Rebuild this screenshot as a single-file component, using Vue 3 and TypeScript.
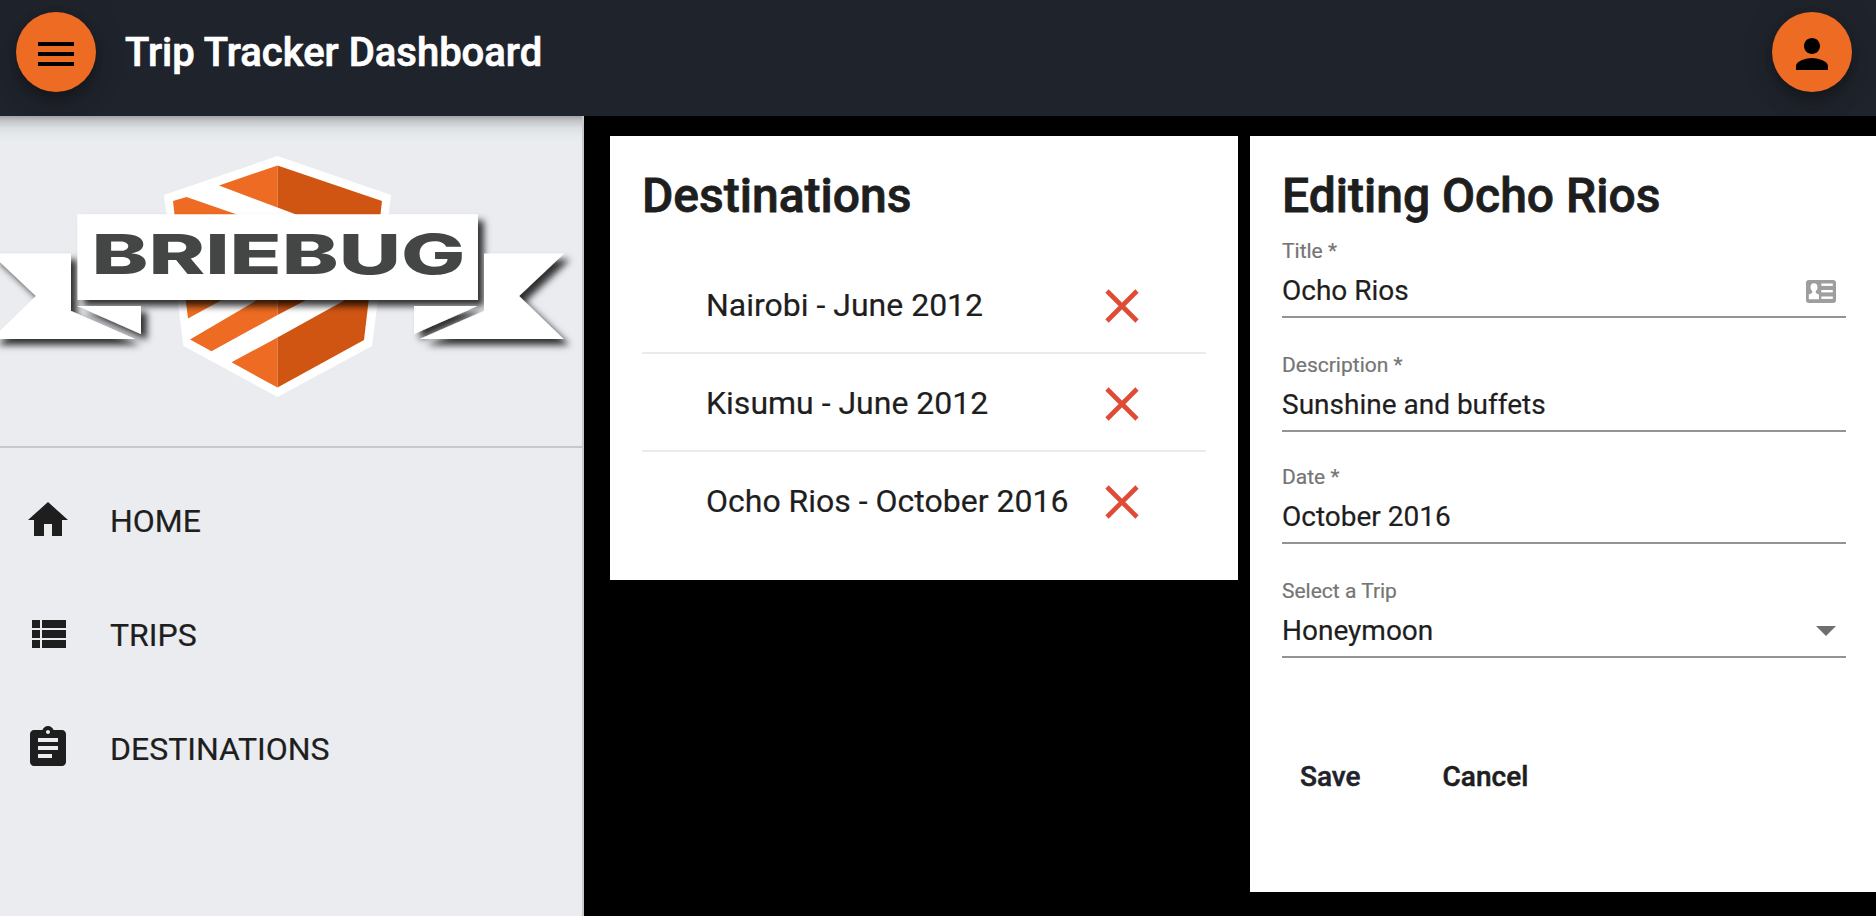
<script setup lang="ts">
import { ref } from 'vue'

interface NavItem {
  label: string
  icon: string
}

interface Field {
  label: string
  value: string
  kind: 'contact' | 'plain' | 'select'
}

const navItems: NavItem[] = [
  { label: 'HOME', icon: 'M10 20v-6h4v6h5v-8h3L12 3 2 12h3v8z' },
  {
    label: 'TRIPS',
    icon: 'M4 14h4v-4H4v4zm0 5h4v-4H4v4zM4 9h4V5H4v4zm5 5h12v-4H9v4zm0 5h12v-4H9v4zM9 5v4h12V5H9z',
  },
  {
    label: 'DESTINATIONS',
    icon: 'M19 3h-4.18C14.4 1.84 13.3 1 12 1c-1.3 0-2.4.84-2.82 2H5c-1.1 0-2 .9-2 2v14c0 1.1.9 2 2 2h14c1.1 0 2-.9 2-2V5c0-1.1-.9-2-2-2zm-7 0c.55 0 1 .45 1 1s-.45 1-1 1-1-.45-1-1 .45-1 1-1zm2 14H7v-2h7v2zm3-4H7v-2h10v2zm0-4H7V7h10v2z',
  },
]

const destinations = ref<string[]>([
  'Nairobi - June 2012',
  'Kisumu - June 2012',
  'Ocho Rios - October 2016',
])

const fields: Field[] = [
  { label: 'Title *', value: 'Ocho Rios', kind: 'contact' },
  { label: 'Description *', value: 'Sunshine and buffets', kind: 'plain' },
  { label: 'Date *', value: 'October 2016', kind: 'plain' },
  { label: 'Select a Trip', value: 'Honeymoon', kind: 'select' },
]

function remove(index: number): void {
  destinations.value.splice(index, 1)
}
</script>

<template>
  <div class="app">
    <header class="toolbar">
      <button class="fab" aria-label="Menu">
        <svg viewBox="0 0 24 24"><path d="M3 18h18v-2H3v2zm0-5h18v-2H3v2zm0-7v2h18V6H3z" /></svg>
      </button>
      <span class="brand">Trip Tracker Dashboard</span>
      <button class="fab" aria-label="Account">
        <svg viewBox="0 0 24 24">
          <path d="M12 12c2.21 0 4-1.79 4-4s-1.79-4-4-4-4 1.79-4 4 1.79 4 4 4zm0 2c-2.67 0-8 1.34-8 4v2h16v-2c0-2.66-5.33-4-8-4z" />
        </svg>
      </button>
    </header>

    <div class="body">
      <aside class="sidebar">
        <svg class="logo" viewBox="0 116 582 330">
          <defs>
            <filter id="ribbonShadow" x="-20" y="240" width="620" height="130" filterUnits="userSpaceOnUse">
              <feDropShadow dx="6" dy="6" stdDeviation="3.5" flood-color="#000" flood-opacity="0.8" />
            </filter>
            <filter id="bannerShadow" x="60" y="200" width="440" height="130" filterUnits="userSpaceOnUse">
              <feDropShadow dx="6" dy="6" stdDeviation="3.5" flood-color="#000" flood-opacity="0.8" />
            </filter>
          </defs>
          <polygon fill="#fff" points="277.5,156 391,195 372,346 277.5,397 183.5,346 164,195" />
          <g fill="#ed6b22">
            <polygon points="277.5,165.5 219,185.5 277.5,207.5" />
            <polygon points="173,201 186.5,197 250,219 175,219" />
            <polygon points="184.5,290 188,318.5 240,290" />
            <polygon points="190,339.5 211.5,351.3 277.5,315 277.5,288" />
            <polygon points="231.5,362.3 277.5,337.5 277.5,387.5" />
          </g>
          <g fill="#d15512">
            <polygon points="277.5,165.5 382,201 380,219 308,219 277.5,207.5" />
            <polygon points="277.5,288 329,288 277.5,315" />
            <polygon points="277.5,337.5 365,289 370,289 364,340 277.5,387.5" />
          </g>
          <g filter="url(#bannerShadow)">
            <rect x="77.5" y="214.5" width="400.3" height="85.5" fill="#fff" />
          </g>
          <g fill="#fff" filter="url(#ribbonShadow)">
            <polygon points="77.5,306 141,306 141,334" />
            <polygon points="477.5,306 414,306 414,334" />
            <polygon points="71,253.5 -9,253.5 36,296 -8.5,339 135,339 71,311" />
            <polygon points="484,253.5 564,253.5 519,296 563.5,339 420,339 484,311" />
          </g>
          <rect x="77.5" y="214.5" width="400.3" height="85.5" fill="#fff" />
          <text class="wordmark" x="91.5" y="274.3" textLength="374" lengthAdjust="spacingAndGlyphs">BRIEBUG</text>
        </svg>
        <nav class="nav">
          <a v-for="item in navItems" :key="item.label" class="nav-item">
            <svg viewBox="0 0 24 24"><path :d="item.icon" /></svg>
            <span>{{ item.label }}</span>
          </a>
        </nav>
      </aside>

      <main class="content">
        <section class="card list-card">
          <h1>Destinations</h1>
          <ul>
            <li v-for="(name, i) in destinations" :key="name">
              <span class="name">{{ name }}</span>
              <svg class="remove" viewBox="0 0 34 34" @click="remove(i)"><path d="M2 2 32 32M32 2 2 32" /></svg>
            </li>
          </ul>
        </section>

        <section class="card form-card">
          <h1>Editing Ocho Rios</h1>
          <div v-for="f in fields" :key="f.label" class="field">
            <label>{{ f.label }}</label>
            <div class="control">
              <span>{{ f.value }}</span>
              <svg v-if="f.kind === 'contact'" class="contact" viewBox="0 0 30 23">
                <rect width="30" height="23" rx="3" fill="#9e9e9e" />
                <g fill="#fff">
                  <ellipse cx="8" cy="7.3" rx="3.5" ry="4" />
                  <path d="M6.2 10h3.6v3l3.2 1.6v4.7H2.8v-4.7L6.2 13z" />
                  <rect x="15.3" y="3.5" width="11.5" height="2.4" />
                  <rect x="15.3" y="10" width="11.5" height="2.4" />
                  <rect x="15.3" y="16.5" width="11.5" height="2.4" />
                </g>
              </svg>
              <svg v-if="f.kind === 'select'" class="arrow" viewBox="0 0 20 10"><path d="M0 0h20L10 10z" /></svg>
            </div>
          </div>
          <div class="actions">
            <button class="save">Save</button>
            <button>Cancel</button>
          </div>
        </section>
      </main>
    </div>
  </div>
</template>

<style>
body {
  margin: 0;
  background: #000;
  overflow: hidden;
}
</style>

<style scoped>
.app {
  width: 1876px;
  height: 916px;
  display: flex;
  flex-direction: column;
  overflow: hidden;
  background: #000;
  color: #1e1e1e;
  font-family: Roboto, "Liberation Sans", sans-serif;
  -webkit-text-stroke: 0.2px currentColor;
}
button {
  border: 0;
  padding: 0;
  background: none;
  font: inherit;
  color: inherit;
}
.toolbar {
  height: 116px;
  flex: none;
  box-sizing: border-box;
  padding: 12px 24px 24px 16px;
  display: flex;
  align-items: center;
  overflow: hidden;
  background: #1f232b;
}
.fab {
  width: 80px;
  height: 80px;
  flex: none;
  box-sizing: border-box;
  padding-top: 4px;
  border-radius: 50%;
  display: flex;
  align-items: center;
  justify-content: center;
  background: #ed6b22;
  box-shadow: 0 6px 10px -2px rgba(0, 0, 0, 0.2), 0 12px 20px rgba(0, 0, 0, 0.14), 0 2px 36px rgba(0, 0, 0, 0.12);
}
.fab svg {
  width: 48px;
  height: 48px;
}
.brand {
  flex: 1;
  margin-left: 29px;
  padding-top: 2px;
  font-size: 40px;
  font-weight: 500;
  line-height: 80px;
  color: #fff;
  -webkit-text-stroke-width: 0.7px;
}
.body {
  flex: 1;
  display: flex;
  min-height: 0;
}
.sidebar {
  width: 584px;
  flex: none;
  box-sizing: border-box;
  border-right: 2px solid #c6c8cb;
  background: linear-gradient(#a2a3a6 0, #c3c5c8 5px, #dcdfe2 12px, #e6e9ec 19px, #eaecf0 26px);
}
.logo {
  display: block;
  width: 582px;
  height: 330px;
  border-bottom: 2px solid #c6c8cb;
}
.wordmark {
  font-family: Inter, "Liberation Sans", sans-serif;
  font-size: 55px;
  font-weight: 800;
  fill: #444645;
  -webkit-text-stroke-width: 0;
}
.nav {
  padding-top: 15px;
}
.nav-item {
  height: 114px;
  padding-left: 24px;
  display: flex;
  align-items: center;
  font-size: 32px;
}
.nav-item svg {
  width: 48px;
  height: 48px;
  margin-right: 38px;
  fill: #1e1e1e;
}
.nav-item span {
  margin-top: 2px;
}
.content {
  flex: 1;
  display: flex;
  align-items: flex-start;
  gap: 12px;
  padding: 20px 0 0 26px;
}
.card {
  box-sizing: border-box;
  padding: 32px;
  background: #fff;
}
.list-card {
  width: 628px;
  height: 444px;
  flex: none;
}
.form-card {
  width: 626px;
  height: 756px;
  flex: none;
  padding-right: 30px;
}
h1 {
  margin: 0;
  font-size: 48px;
  line-height: 56px;
  font-weight: 500;
  -webkit-text-stroke-width: 0.8px;
}
ul {
  list-style: none;
  margin: 32px 0 0;
  padding: 0;
}
li {
  height: 98px;
  box-sizing: border-box;
  padding: 0 67px 0 64px;
  display: flex;
  align-items: center;
  justify-content: space-between;
  border-bottom: 2px solid #ebebeb;
  font-size: 32px;
}
li:last-child {
  border-bottom-color: transparent;
}
.name {
  margin-top: 2px;
}
.remove {
  width: 34px;
  height: 34px;
  margin-top: 4px;
  fill: none;
  stroke: #e04b35;
  stroke-width: 4.6;
}
.field {
  height: 114px;
  box-sizing: border-box;
  padding-top: 14px;
}
.field:nth-of-type(2) {
  height: 112px;
}
label {
  display: block;
  padding-top: 1px;
  font-size: 21px;
  line-height: 24px;
  color: #757575;
}
.control {
  height: 55px;
  box-sizing: border-box;
  padding: 2px 10px 0 0;
  display: flex;
  align-items: center;
  justify-content: space-between;
  border-bottom: 2px solid #949494;
  font-size: 28px;
}
.contact {
  width: 30px;
  height: 23px;
  margin-top: 2px;
}
.arrow {
  width: 20px;
  height: 10px;
  margin-top: 1px;
  fill: #6f6f6f;
}
.actions {
  display: flex;
  gap: 82px;
  margin-top: 79px;
  padding-left: 18px;
  font-size: 28px;
  font-weight: 500;
  line-height: 40px;
  -webkit-text-stroke-width: 0.5px;
}
.save {
  color: #1f232b;
}
</style>
